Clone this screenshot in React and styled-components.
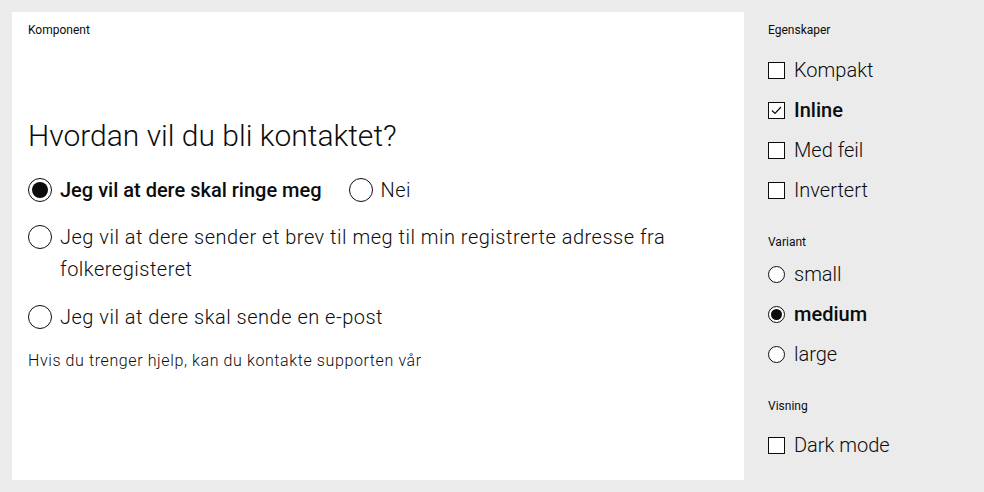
import styled, { createGlobalStyle } from 'styled-components';

const GlobalStyle = createGlobalStyle`
  html, body {
    margin: 0;
    padding: 0;
    background: #ebebeb;
    font-family: Roboto, "Liberation Sans", sans-serif;
    color: #0c0c0c;
  }
  * { box-sizing: border-box; }
`;

const Page = styled.div`
  display: flex;
  width: 984px;
  height: 492px;
  padding: 12px 0 12px 12px;
  gap: 24px;
`;

const Stage = styled.section`
  width: 732px;
  height: 468px;
  background: #fff;
  padding: 10px 16px;
`;

const SmallLabel = styled.div`
  font-size: 12px;
  line-height: 16px;
  font-weight: 400;
`;

const Fieldset = styled.fieldset`
  border: 0;
  margin: 80px 0 0;
  padding: 0;
`;

const Legend = styled.legend`
  padding: 0;
  font-size: 30px;
  line-height: 36px;
  font-weight: 300;
  margin-bottom: 20px;
`;

const InlineGroup = styled.div`
  display: flex;
  gap: 27px;
`;

const RadioRow = styled.label`
  display: flex;
  align-items: flex-start;
  gap: 8px;
  font-size: 20px;
  line-height: 32px;
  font-weight: ${({ checked }) => (checked ? 500 : 300)};
  letter-spacing: ${({ checked }) => (checked ? 0 : 0.5)}px;
  margin-bottom: ${({ gap }) => gap || 0}px;
`;

const RadioDot = styled.span`
  flex-shrink: 0;
  width: ${({ size }) => size}px;
  height: ${({ size }) => size}px;
  margin-top: ${({ size }) => (size > 20 ? 4 : 0)}px;
  border: 1.5px solid #0c0c0c;
  border-radius: 50%;
  background: #fff;
  position: relative;
  &::after {
    content: '';
    display: ${({ checked }) => (checked ? 'block' : 'none')};
    position: absolute;
    inset: ${({ size }) => (size > 20 ? 3 : 2)}px;
    border-radius: 50%;
    background: #0c0c0c;
  }
`;

const HelpText = styled.p`
  margin: 16px 0 0;
  font-size: 16px;
  line-height: 24px;
  font-weight: 300;
  letter-spacing: 0.6px;
`;

const Sidebar = styled.aside`
  width: 216px;
  padding-top: 10px;
`;

const Section = styled.div`
  margin-bottom: 28px;
`;

const OptionList = styled.div`
  display: flex;
  flex-direction: column;
  gap: 8px;
  margin-top: ${({ offset }) => offset}px;
`;

const OptionRow = styled.label`
  display: flex;
  align-items: center;
  gap: 9px;
  height: 32px;
  font-size: 20px;
  font-weight: ${({ checked }) => (checked ? 500 : 300)};
`;

const Box = styled.span`
  width: 17px;
  height: 17px;
  border: 1.5px solid #0c0c0c;
  background: #fff;
  display: flex;
  align-items: center;
  justify-content: center;
`;

const Radio = ({ label, checked, gap }) => (
  <RadioRow checked={checked} gap={gap}>
    <RadioDot size={24} checked={checked} />
    <span>{label}</span>
  </RadioRow>
);

const Check = ({ label, checked }) => (
  <OptionRow checked={checked}>
    <Box>
      {checked && (
        <svg width="11" height="9" viewBox="0 0 11 9">
          <path d="M1 4.5 L4 7.5 L10 1" fill="none" stroke="#0c0c0c" strokeWidth="1.2" />
        </svg>
      )}
    </Box>
    {label}
  </OptionRow>
);

const SideRadio = ({ label, checked }) => (
  <OptionRow checked={checked}>
    <RadioDot size={17} checked={checked} />
    {label}
  </OptionRow>
);

const App = () => (
  <>
    <GlobalStyle />
    <Page>
      <Stage>
        <SmallLabel>Komponent</SmallLabel>
        <Fieldset>
          <Legend>Hvordan vil du bli kontaktet?</Legend>
          <InlineGroup>
            <Radio label="Jeg vil at dere skal ringe meg" checked gap={15} />
            <Radio label="Nei" />
          </InlineGroup>
          <Radio label="Jeg vil at dere sender et brev til meg til min registrerte adresse fra folkeregisteret" gap={16} />
          <Radio label="Jeg vil at dere skal sende en e-post" />
          <HelpText>Hvis du trenger hjelp, kan du kontakte supporten vår</HelpText>
        </Fieldset>
      </Stage>
      <Sidebar>
        <Section>
          <SmallLabel>Egenskaper</SmallLabel>
          <OptionList offset={16}>
            <Check label="Kompakt" />
            <Check label="Inline" checked />
            <Check label="Med feil" />
            <Check label="Invertert" />
          </OptionList>
        </Section>
        <Section>
          <SmallLabel>Variant</SmallLabel>
          <OptionList offset={8}>
            <SideRadio label="small" />
            <SideRadio label="medium" checked />
            <SideRadio label="large" />
          </OptionList>
        </Section>
        <Section>
          <SmallLabel>Visning</SmallLabel>
          <OptionList offset={15}>
            <Check label="Dark mode" />
          </OptionList>
        </Section>
      </Sidebar>
    </Page>
  </>
);

export default App;
